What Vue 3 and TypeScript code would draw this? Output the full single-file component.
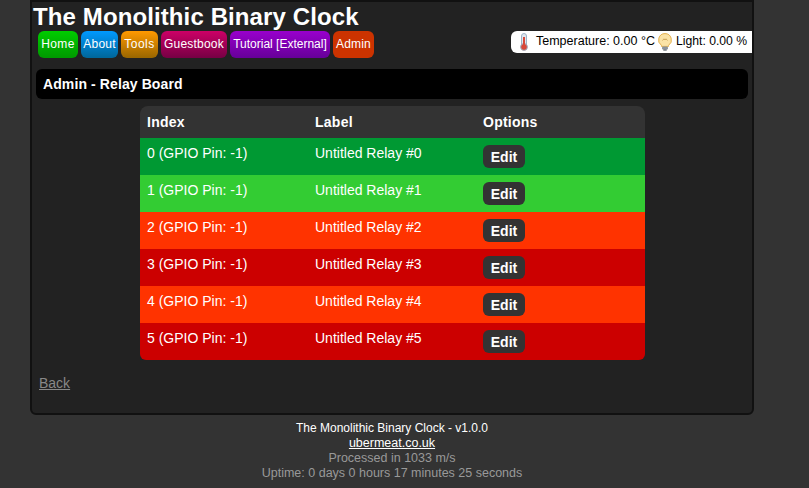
<script setup lang="ts">
interface NavItem { label: string; cls: string }
const nav: NavItem[] = [
  { label: 'Home', cls: 'home' },
  { label: 'About', cls: 'about' },
  { label: 'Tools', cls: 'tools' },
  { label: 'Guestbook', cls: 'guest' },
  { label: 'Tutorial [External]', cls: 'tut' },
  { label: 'Admin', cls: 'admin' },
]
const rows = [
  { i: 0, cls: 'dg' },
  { i: 1, cls: 'lg' },
  { i: 2, cls: 'or' },
  { i: 3, cls: 'rd' },
  { i: 4, cls: 'or' },
  { i: 5, cls: 'rd' },
]
</script>

<template>
  <div class="page">
    <div class="box">
      <h1 class="title">The Monolithic Binary Clock</h1>
      <div class="status">
        <svg class="ico therm" width="10" height="18" viewBox="0 0 10 18">
          <rect x="2.5" y="0.5" width="5" height="13" rx="2.5" fill="#dfe6ee" stroke="#9db2c6" />
          <circle cx="5" cy="14" r="3.4" fill="#d8483a" stroke="#9db2c6" />
          <rect x="4" y="4" width="2" height="9" fill="#d8483a" />
        </svg>
        <span class="stxt temp">Temperature: 0.00 °C</span>
        <svg class="ico bulb" width="14" height="18" viewBox="0 0 14 18">
          <path d="M7 .6a6.4 6.4 0 0 0-3.6 11.7V13.4h7.2v-1.1A6.4 6.4 0 0 0 7 .6z" fill="#fbe3a6" stroke="#e3b04e" />
          <path d="M4.5 7.5 6 5.8 7 7 8 5.8 9.500 7.500" fill="none" stroke="#c79a4a" stroke-width=".8" />
          <rect x="4" y="13.4" width="6" height="3" rx="1" fill="#8d949c" />
          <rect x="5.300" y="16.300" width="3.400" height="1.400" fill="#6b7178" />
        </svg>
        <span class="stxt light">Light: 0.00 %</span>
      </div>
      <nav class="nav">
        <a v-for="n in nav" :key="n.label" class="navb" :class="n.cls">{{ n.label }}</a>
      </nav>
      <div class="heading">Admin - Relay Board</div>
      <table class="tbl">
        <thead>
          <tr>
            <th class="c1">Index</th>
            <th class="c2">Label</th>
            <th class="c3">Options</th>
          </tr>
        </thead>
        <tbody>
          <tr v-for="r in rows" :key="r.i" :class="r.cls">
            <td>{{ r.i }} (GPIO Pin: -1)</td>
            <td>Untitled Relay #{{ r.i }}</td>
            <td><a class="edit">Edit</a></td>
          </tr>
        </tbody>
      </table>
      <a class="back">Back</a>
    </div>
    <footer class="foot">
      <div class="w">The Monolithic Binary Clock - v1.0.0</div>
      <div class="w u wide">ubermeat.co.uk</div>
      <div class="wide">Processed in 1033 m/s</div>
      <div class="wide">Uptime: 0 days 0 hours 17 minutes 25 seconds</div>
    </footer>
  </div>
</template>

<style>
html, body { margin: 0; background: #333333; }
</style>

<style scoped>
.page {
  width: 809px;
  height: 488px;
  overflow: hidden;
  background: #333333;
  font-family: "Liberation Sans", Arial, sans-serif;
}
.box {
  position: relative;
  box-sizing: border-box;
  width: 724px;
  height: 415px;
  margin-left: 30px;
  background: #222222;
  border: 2px solid #111111;
  border-radius: 0 0 6px 6px;
  padding-top: 1px;
}
.title {
  margin: 0 0 0 1px;
  height: 28px;
  font-size: 24px;
  line-height: 28px;
  font-weight: bold;
  letter-spacing: 0.11px;
  color: #fff;
}
.status {
  position: absolute;
  top: 29px;
  left: 479px;
  width: 241px;
  height: 22px;
  box-sizing: border-box;
  background: #fff;
  border-radius: 6px 0 0 6px;
  display: flex;
  align-items: center;
  padding-left: 8px;
  color: #000;
}
.ico { flex: none; }
.stxt { white-space: nowrap; position: relative; top: -1px; }
.temp { margin: 0 3px 0 7px; font-size: 12.5px; }
.light { margin-left: 4px; font-size: 12.2px; }
.nav {
  display: flex;
  gap: 3px;
  margin: 0 0 0 6px;
  height: 27px;
}
.navb {
  box-sizing: border-box;
  height: 27px;
  border-radius: 6px;
  font-size: 12px;
  line-height: 27px;
  text-align: center;
  color: #fff;
  white-space: nowrap;
}
.home { width: 40px; letter-spacing: 0.4px; background: linear-gradient(#00cc00, #009900); }
.about { width: 37px; letter-spacing: 0.2px; background: linear-gradient(#0099ff, #006699); }
.tools { width: 37px; letter-spacing: 0.5px; background: linear-gradient(#ff9900, #996600); }
.guest { width: 66px; letter-spacing: 0.2px; background: linear-gradient(#cc0066, #770044); }
.tut { width: 100px; background: linear-gradient(#9900cc, #660099); }
.admin { width: 41px; letter-spacing: 0.2px; background: #cc3300; }
.heading {
  box-sizing: border-box;
  height: 30px;
  margin: 11px 4px 0;
  padding-left: 7px;
  background: #000;
  border-radius: 6px;
  color: #fff;
  font-size: 14px;
  font-weight: bold;
  letter-spacing: 0.1px;
  line-height: 30px;
}
.tbl {
  width: 505px;
  margin: 7px 0 0 108px;
  border-collapse: separate;
  border-spacing: 0;
  table-layout: fixed;
  font-size: 14px;
  color: #fff;
}
.tbl th {
  box-sizing: border-box;
  height: 32px;
  padding: 0 0 0 7px;
  background: #333333;
  text-align: left;
  font-weight: bold;
  letter-spacing: 0.25px;
}
.c1, .c2 { width: 168px; }
.c3 { width: 169px; }
.tbl th:first-child { border-top-left-radius: 8px; }
.tbl th:last-child { border-top-right-radius: 8px; }
.tbl td {
  height: 37px;
  padding: 0 0 0 7px;
  vertical-align: top;
  line-height: 30px;
}
.tbl tbody tr:last-child td:first-child { border-bottom-left-radius: 6px; }
.tbl tbody tr:last-child td:last-child { border-bottom-right-radius: 6px; }
.dg td { background: #009933; }
.lg td { background: #33cc33; }
.or td { background: #ff3300; }
.rd td { background: #cc0000; }
.edit {
  display: inline-block;
  margin-top: 7px;
  height: 23px;
  width: 42px;
  background: #333333;
  border-radius: 6px;
  text-align: center;
  font-weight: bold;
  line-height: 24px;
  vertical-align: top;
}
.back {
  display: block;
  width: max-content;
  margin: 14px 0 0 7px;
  font-size: 14px;
  line-height: 18px;
  color: #888888;
  text-decoration: underline;
}
.foot {
  width: 724px;
  margin: 6px 0 0 30px;
  text-align: center;
  font-size: 12px;
  line-height: 15px;
  color: #999999;
}
.wide { font-size: 12.5px; }
.w { color: #fff; }
.u { text-decoration: underline; }
</style>
